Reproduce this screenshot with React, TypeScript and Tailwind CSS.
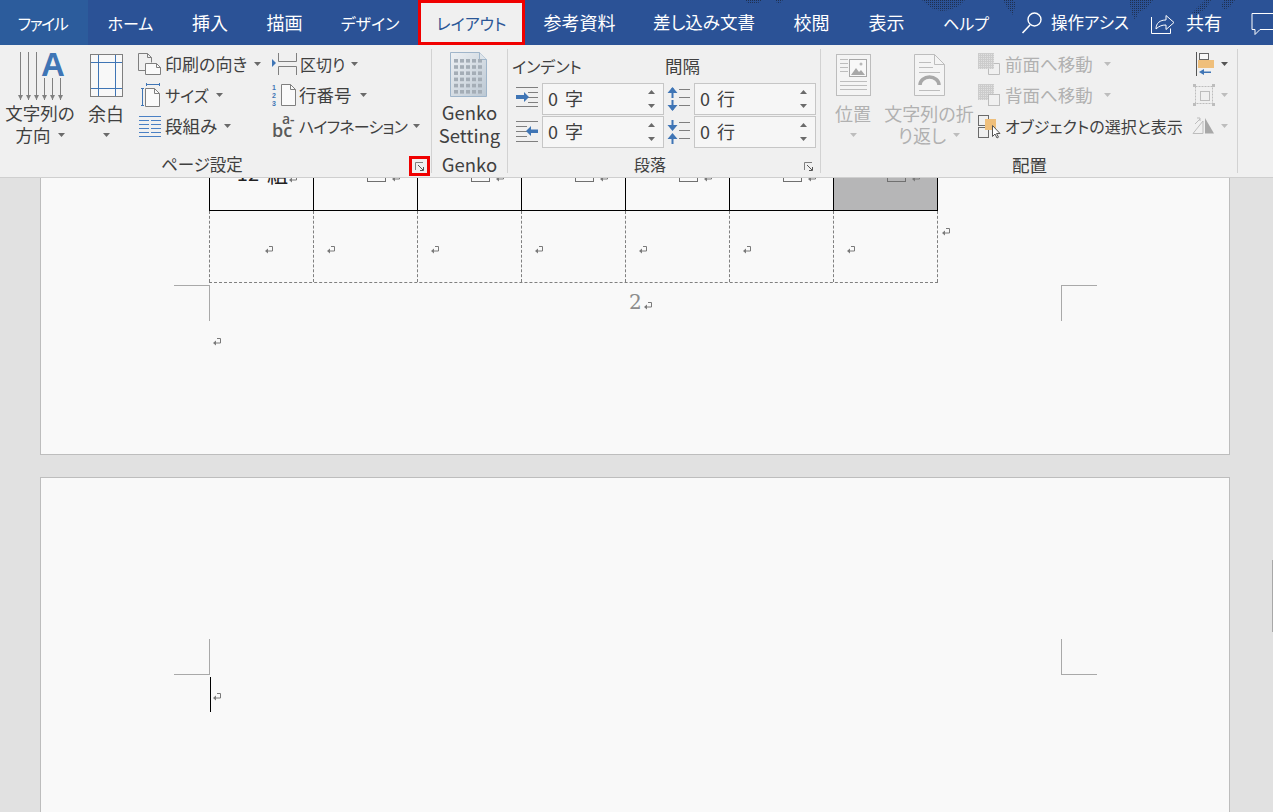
import React from "react";

const Caret = ({ c = "#6a6a6a", up = false }: { c?: string; up?: boolean }) => (
  <svg width="7" height="4" viewBox="0 0 7 4" className="shrink-0">
    <path d={up ? "M3.5 0L7 4H0z" : "M0 0h7L3.5 4z"} fill={c} />
  </svg>
);

const Ret = ({ c = "#7a7a7a" }: { c?: string }) => (
  <svg width="8" height="8" viewBox="0 0 8 8" className="shrink-0 block">
    <path d="M4 .5h3.500v4.500H2" fill="none" stroke={c} strokeWidth="1" />
    <path d="M3 2.500L0 5l3 2.500z" fill={c} />
  </svg>
);

const G = "#7f7f7f";
const B = "#3f75b5";
const D = "#bdbdbd";

const Arrow = ({ x, y1, y2, c = "#808080" }: { x: number; y1: number; y2: number; c?: string }) => (
  <g>
    <path d={`M${x} ${y1}V${y2}`} stroke={c} strokeWidth="1" />
    <path d={`M${x - 2.5} ${y2 - 5}h5L${x} ${y2}z`} fill={c} />
  </g>
);

const TextDirIcon = () => (
  <svg width="80" height="50" viewBox="0 0 80 50">
    <Arrow x={20.5} y1={1} y2={49} />
    <Arrow x={28.5} y1={1} y2={49} />
    <Arrow x={36.5} y1={1} y2={49} />
    <text x="53" y="25" textAnchor="middle" fontFamily="'Liberation Sans',sans-serif" fontWeight="700" fontSize="33" fill={B}>A</text>
    <Arrow x={44.5} y1={27} y2={49} />
    <Arrow x={52.5} y1={27} y2={49} />
    <Arrow x={60.5} y1={27} y2={49} />
  </svg>
);

const MarginIcon = () => (
  <svg width="52" height="50" viewBox="0 0 52 50">
    <rect x="10.5" y="3.5" width="32" height="42" fill="#f8f8f8" stroke={G} />
    <path d="M18.5 4v41M35.5 4v41M11 11.5h31M11 37.5h31" stroke={B} strokeWidth="1" />
  </svg>
);

const OrientIcon = () => (
  <svg width="25" height="24" viewBox="0 0 25 24">
    <path d="M1.5 1.5h9l4 4v5M1.5 1.5v17h7" fill="none" stroke={G} />
    <path d="M8.5 11.5h11l4 4v7h-15z" fill="#fafafa" stroke={G} />
    <path d="M10.5 1.5v4h4M19.5 11.5v4h4" fill="none" stroke={G} />
  </svg>
);

const SizeIcon = () => (
  <svg width="24" height="24" viewBox="0 0 24 24">
    <path d="M9 1.5h14M9.500 0v3M22.500 0v3M5.500 5v18M4 5.500h3M4 22.500h3" stroke={B} fill="none" />
    <path d="M8.500 5.500h9l5 5v13h-14z" fill="#fafafa" stroke={G} />
    <path d="M17.500 5.500v5h5" fill="none" stroke={G} />
  </svg>
);

const ColsIcon = () => (
  <svg width="24" height="24" viewBox="0 0 24 24">
    <path d="M2 2.500h22M2 6.500h10M14 6.500h10M2 10.500h10M14 10.500h10M2 14.500h10M14 14.500h10M2 18.500h10M14 18.500h10M2 22.500h22" stroke="#4a80c4" />
  </svg>
);

const BreakIcon = () => (
  <svg width="26" height="24" viewBox="0 0 26 24">
    <path d="M1 7l4 4-4 4z" fill={B} />
    <path d="M7.500 1v8.500h18V1M7.500 23v-8.500h18V23" fill="none" stroke={G} />
  </svg>
);

const LineNumIcon = () => (
  <svg width="26" height="24" viewBox="0 0 26 24">
    <text x="1" y="7" fontSize="7" fontWeight="700" fontFamily="'Liberation Sans',sans-serif" fill={B}>1</text>
    <text x="1" y="15" fontSize="7" fontWeight="700" fontFamily="'Liberation Sans',sans-serif" fill={B}>2</text>
    <text x="1" y="23" fontSize="7" fontWeight="700" fontFamily="'Liberation Sans',sans-serif" fill={B}>3</text>
    <path d="M10.500 1.500h9l5 5v16h-14z" fill="#fafafa" stroke={G} />
    <path d="M19.500 1.500v5h5" fill="none" stroke={G} />
  </svg>
);

const HyphenIcon = () => (
  <svg width="27" height="26" viewBox="0 0 27 26">
    <text x="11" y="11" fontSize="14" fontFamily="'Open Sans',sans-serif" fontWeight="600" fill="#5a5a5a">a-</text>
    <text x="1" y="24" fontSize="18" fontFamily="'Open Sans',sans-serif" fontWeight="600" fill="#5a5a5a">bc</text>
  </svg>
);

const GenkoIcon = () => (
  <svg width="75" height="50" viewBox="0 0 75 50">
    <defs>
      <linearGradient id="gk" x1="0" y1="0" x2="1" y2="1">
        <stop offset="0" stopColor="#eef1f4" />
        <stop offset="1" stopColor="#bcc8d3" />
      </linearGradient>
    </defs>
    <path d="M18.500 3.500h29l7 7v37h-36z" fill="url(#gk)" stroke="#9fb5ca" />
    <path d="M47.500 3.500v7h7" fill="#dfe5ea" stroke="#9fb5ca" />
    {[0, 1, 2, 3, 4, 5].map((r) =>
      [0, 1, 2, 3, 4].map((c) => (
        <rect key={`${r}-${c}`} x={22 + c * 6} y={10 + r * 6.2} width="4" height="3.6" fill="#a4adb6" />
      ))
    )}
  </svg>
);

const IndentInIcon = () => (
  <svg width="30" height="32" viewBox="0 0 30 32">
    <path d="M4 4.500h22M16 9.500h10M16 14.500h10M16 19.500h10M4 23.500h22" stroke={G} />
    <path d="M4 12h8V9l5 5-5 5v-3H4z" fill={B} />
  </svg>
);

const IndentOutIcon = () => (
  <svg width="30" height="32" viewBox="0 0 30 32">
    <path d="M4 5.500h22M4 10.500h11M4 15.500h11M4 20.500h11M4 25.500h22" stroke={G} />
    <path d="M26 13.500h-7V10l-5 5 5 5v-3h7z" fill={B} />
  </svg>
);

const SpaceOutIcon = () => (
  <svg width="30" height="32" viewBox="0 0 30 32">
    <path d="M8.500 5v10M8.500 17v10" stroke={B} strokeWidth="2" />
    <path d="M3.500 10l5-6 5 6zM3.500 22l5 6 5-6z" fill={B} />
    <path d="M15 6.500h11M15 14.500h11M15 22.500h11" stroke={G} />
  </svg>
);

const SpaceInIcon = () => (
  <svg width="30" height="32" viewBox="0 0 30 32">
    <path d="M8.500 4v9M8.500 19v9" stroke={B} strokeWidth="2" />
    <path d="M3.500 9l5 6 5-6zM3.500 23l5-6 5 6z" fill={B} />
    <path d="M15 6.500h11M15 14.500h11M15 22.500h11" stroke={G} />
  </svg>
);

const PositionIcon = () => (
  <svg width="64" height="50" viewBox="0 0 64 50">
    <rect x="15.500" y="3.500" width="34" height="41" fill="#f4f4f4" stroke={D} />
    <path d="M19 8.500h8M19 12.500h8M19 16.500h8M19 20.500h8M19 30.500h27M19 34.500h27M19 38.500h27" stroke={D} />
    <rect x="28.500" y="8.500" width="17" height="17" fill="#f8f8f8" stroke="#a8a8a8" />
    <path d="M30 24l5-7 3 4 2-2 4 5z" fill="#a8a8a8" />
    <circle cx="40" cy="13" r="1.500" fill="#b8b8b8" />
  </svg>
);

const WrapIcon = () => (
  <svg width="88" height="50" viewBox="0 0 88 50">
    <path d="M29.500 3.500h20l10 10v31h-30z" fill="#f4f4f4" stroke={D} />
    <path d="M49.500 3.500v10h10" fill="none" stroke={D} />
    <path d="M34 11.500h12M34 16.500h14M34 21.500h21M34 39.500h21" stroke={D} />
    <path d="M35 34a9.500 8 0 0 1 19 0" fill="none" stroke="#a8a8a8" strokeWidth="3.500" />
  </svg>
);

const Dots = ({ x, y, s = 14 }: { x: number; y: number; s?: number }) => (
  <rect x={x} y={y} width={s} height={s} fill="url(#dis)" />
);

const FrontIcon = ({ back = false }: { back?: boolean }) => (
  <svg width="26" height="24" viewBox="0 0 26 24">
    <defs>
      <pattern id="dis" width="2" height="2" patternUnits="userSpaceOnUse">
        <rect width="2" height="2" fill="#cccccc" />
        <rect width="1" height="1" fill="#e0e0e0" />
      </pattern>
    </defs>
    {back ? (
      <>
        <Dots x={1} y={1} s={16} />
        <rect x="11.500" y="11.500" width="11" height="11" fill="#f0f0f0" stroke={D} />
      </>
    ) : (
      <>
        <path d="M11.500 11.500h11v11h-11z" fill="#f0f0f0" stroke={D} />
        <Dots x={1} y={1} s={16} />
      </>
    )}
  </svg>
);

const SelectIcon = () => (
  <svg width="26" height="26" viewBox="0 0 26 26">
    <rect x="1.500" y="2.500" width="10" height="10" fill="none" stroke="#6a6a6a" />
    <rect x="1.500" y="14.500" width="10" height="10" fill="none" stroke="#6a6a6a" />
    <rect x="8" y="6" width="11" height="11" fill="#efbf7b" />
    <path d="M15.500 12.500v11l2.500-2.500 2 4 1.500-.8-2-3.700h3.500z" fill="#fff" stroke="#555" />
  </svg>
);

const AlignIcon = () => (
  <svg width="24" height="26" viewBox="0 0 24 26">
    <path d="M4.500 1v24" stroke="#555" />
    <rect x="7.500" y="2.500" width="9" height="6" fill="#f8f8f8" stroke="#666" />
    <rect x="6" y="9" width="16" height="8" fill="#efbf7b" />
    <path d="M19 20.500h-7V18l-5 3 5 3v-2h7z" fill={B} />
  </svg>
);

const GroupIcon = () => (
  <svg width="24" height="24" viewBox="0 0 24 24">
    <rect x="3.500" y="3.500" width="17" height="17" fill="none" stroke={D} strokeDasharray="2 1" />
    <rect x="8.500" y="8.500" width="9" height="9" fill="none" stroke={D} />
    <path d="M1 1h3v3H1zM20 1h3v3h-3zM1 20h3v3H1zM20 20h3v3h-3z" fill={D} />
  </svg>
);

const RotateIcon = () => (
  <svg width="24" height="24" viewBox="0 0 24 24">
    <path d="M1 19.500L11 7v12.500z" fill="none" stroke={D} />
    <path d="M13 4l9 15.500H13z" fill="#a8a8a8" />
    <path d="M3 10l5-5M5 4h3v3" fill="none" stroke={D} />
  </svg>
);

const Launcher = () => (
  <svg width="9" height="9" viewBox="0 0 9 9" className="block">
    <path d="M.5 8V.5H8" fill="none" stroke="#7f7f7f" />
    <path d="M3 3l5 5M8.500 5v3.500H5" fill="none" stroke="#555" />
  </svg>
);

const Row = ({
  icon,
  w,
  text,
  gap,
  disabled,
  caret = true,
  cls = "",
}: {
  icon: React.ReactNode;
  w: string;
  text: string;
  gap: string;
  disabled?: boolean;
  caret?: boolean;
  cls?: string;
}) => (
  <div className={`flex items-center h-[31px] whitespace-nowrap ${disabled ? "text-[#b1b1b1]" : "text-[#404040]"}`}>
    <div className={`flex items-center shrink-0 ${w}`}>{icon}</div>
    <span className={`leading-[22px] ${cls}`}>{text}</span>
    {caret && (
      <span className={`flex ${gap}`}>
        <Caret c={disabled ? "#bdbdbd" : "#6a6a6a"} />
      </span>
    )}
  </div>
);

const Large = ({
  w,
  icon,
  l1,
  l2,
  disabled,
  caretOnly,
  cls = "text-[18px]",
}: {
  w: string;
  icon: React.ReactNode;
  l1: string;
  l2?: string;
  disabled?: boolean;
  caretOnly?: boolean;
  cls?: string;
}) => (
  <div className={`flex flex-col items-center shrink-0 whitespace-nowrap pt-[6px] ${w} ${cls} ${disabled ? "text-[#b1b1b1]" : "text-[#404040]"}`}>
    <div className="h-[51px] flex items-start">{icon}</div>
    <div className="h-[22px] leading-[22px]">{l1}</div>
    <div className="h-[22px] leading-[22px] flex items-center gap-[7px]">
      {l2 && <span>{l2}</span>}
      {(caretOnly || l2) && <Caret c={disabled ? "#bdbdbd" : "#6a6a6a"} />}
    </div>
  </div>
);

const Group = ({
  w,
  label,
  children,
  labelClass = "",
  launcher,
}: {
  w: string;
  label: string;
  children: React.ReactNode;
  labelClass?: string;
  launcher?: React.ReactNode;
}) => (
  <div className={`flex flex-col shrink-0 relative ${w}`}>
    <div className="h-[107px] flex">{children}</div>
    <div className={`h-[25px] leading-[25px] text-[#404040] whitespace-nowrap ${labelClass}`}>{label}</div>
    {launcher}
  </div>
);

const Sep = () => <div className="w-px h-[124px] mt-[4px] bg-[#d2d2d2] shrink-0" />;

const Spin = ({ unit }: { unit: string }) => (
  <div className="w-[122px] h-[32px] border border-[#c6c6c6] bg-[#f6f6f6] flex items-center justify-between pl-[5px] pr-[8px]">
    <span className="flex items-center text-[#404040] text-[18px] leading-none -mt-[2px]">
      <span>0</span>
      <span className="ml-[7px]">{unit}</span>
    </span>
    <div className="flex flex-col gap-[10px]">
      <Caret up />
      <Caret />
    </div>
  </div>
);

const TABS: [string, string, string][] = [
  ["ホーム", "w-[85px]", "text-[16px]"],
  ["挿入", "w-[74px]", "text-[18px]"],
  ["描画", "w-[75px]", "text-[18px]"],
  ["デザイン", "w-[96px]", "text-[16px]"],
];
const TABS2: [string, string, string][] = [
  ["参考資料", "w-[109px]", "text-[18px]"],
  ["差し込み文書", "w-[140px]", "text-[17.5px]"],
  ["校閲", "w-[75px]", "text-[18px]"],
  ["表示", "w-[75px]", "text-[18px]"],
  ["ヘルプ", "w-[84px]", "text-[16px]"],
];

const Tab = ({ t, w, c }: { t: string; w: string; c: string }) => (
  <div className={`flex items-center justify-center shrink-0 whitespace-nowrap text-white ${w} ${c}`}>{t}</div>
);

const Cell = ({ first, last, gray }: { first?: boolean; last?: boolean; gray?: boolean }) => (
  <div
    className={`w-[104px] h-[32px] overflow-hidden border-l border-black flex justify-end items-start shrink-0 ${last ? "w-[105px] border-r" : ""} ${gray ? "bg-[#b6b6b7]" : ""}`}
  >
    {first ? (
      <div className="flex items-end -mt-[16px] mr-[16px]">
        <span className="text-[20px] leading-[22px] text-[#222]">12</span>
        <span className="text-[21px] leading-[22px] text-[#222] ml-[8px]">組</span>
        <span className="ml-[1px] mb-[1px]">
          <Ret />
        </span>
      </div>
    ) : (
      <div className="flex items-start gap-[6px] mr-[17px] -mt-[4px]">
        <div className="w-[19px] h-[8px] border border-[#707070]" />
        <Ret />
      </div>
    )}
  </div>
);

const DashCell = ({ first, last }: { first?: boolean; last?: boolean }) => (
  <div
    className={`w-[104px] h-[71px] border-l border-dashed border-[#808080] flex items-center shrink-0 pt-[7px] ${first ? "pl-[55px]" : "pl-[13px]"} ${last ? "w-[105px] border-r" : ""}`}
  >
    <Ret />
  </div>
);

export default function App() {
  return (
    <div
      className="w-[1273px] h-[812px] overflow-hidden relative bg-[#e1e1e1] text-[16px] [font-feature-settings:'palt']"
      style={{ fontFamily: "'Noto Sans CJK JP','Noto Sans',sans-serif" }}
    >
      {/* tabs */}
      <div className="h-[45px] bg-[#2b5296] flex relative">
        <div className="w-[88px] shrink-0 bg-[#2c5c9c] flex items-center justify-center text-white tracking-[-1.5px] pr-[3px]">ファイル</div>
        {TABS.map(([t, w, c]) => (
          <Tab key={t} t={t} w={w} c={c} />
        ))}
        <div className="w-[107px] shrink-0 bg-[#f0f0f0] border-[3px] border-[#f00000] flex items-center justify-center text-[#2b5797]">
          レイアウト
        </div>
        {TABS2.map(([t, w, c]) => (
          <Tab key={t} t={t} w={w} c={c} />
        ))}
        <div className="flex items-center text-white whitespace-nowrap pl-[13px]">
          <svg width="22" height="24" viewBox="0 0 22 24" className="shrink-0">
            <circle cx="13.500" cy="8.500" r="6.500" fill="none" stroke="#fff" strokeWidth="1.400" />
            <path d="M9 14L1.500 22" stroke="#fff" strokeWidth="1.600" />
          </svg>
          <span className="ml-[8px] w-[80px] text-[16.5px]">操作アシス</span>
          <svg width="26" height="24" viewBox="0 0 26 24" className="ml-[19px] shrink-0">
            <path d="M1.500 6v16.500h19v-5" fill="none" stroke="#fff" />
            <path d="M6 18c0-6 4-9 10-9V4.500l8 7-8 7V14c-4 0-7 1-10 4z" fill="none" stroke="#fff" />
          </svg>
          <span className="ml-[10px] text-[18px]">共有</span>
          <svg width="22" height="24" viewBox="0 0 22 24" className="ml-[29px] shrink-0">
            <path d="M1 2.500h24v16H9l-5 5v-5H1z" fill="none" stroke="#fff" />
          </svg>
        </div>
        <svg className="absolute left-0 top-0 pointer-events-none" width="1273" height="22" viewBox="0 0 1273 22">
          <defs>
            <pattern id="dots" width="2" height="2" patternUnits="userSpaceOnUse">
              <rect width="1" height="1" fill="#1f3050" />
            </pattern>
          </defs>
          <path d="M922 0h43l-6 6-10 4-8 1-10-3z" fill="url(#dots)" />
          <path d="M1003 0h10l3 3-3 12-5-6z" fill="url(#dots)" />
          <path d="M1129 0h24l-6 8-8 4-4 8-3-6z" fill="url(#dots)" />
          <path d="M1205 0h6l-4 7-10 8-5-2z" fill="url(#dots)" />
          <path d="M1224 0h11l-4 6-7 4-3-4z" fill="url(#dots)" />
          <path d="M745 0h17l-5 4h-9zM775 0h8l-3 3h-3z" fill="url(#dots)" />
        </svg>
      </div>

      {/* ribbon */}
      <div className="h-[133px] bg-[#f0f0f0] border-b border-[#cfcfcf] flex">
        <Group
          w="w-[431px]"
          label="ページ設定"
          labelClass="pl-[161px] text-[16.5px]"
          launcher={
            <div className="absolute left-[409px] top-[111px] w-[21px] h-[20px] border-[3px] border-[#f00000] flex items-center justify-center">
              <Launcher />
            </div>
          }
        >
          <Large w="w-[80px]" icon={<TextDirIcon />} l1="文字列の" l2="方向" cls="text-[17.5px]" />
          <Large w="w-[52px]" icon={<MarginIcon />} l1="余白" caretOnly />
          <div className="flex flex-col pt-[3px] pl-[5px] w-[138px] shrink-0">
            <Row icon={<OrientIcon />} w="w-[28px]" text="印刷の向き" gap="ml-[7px]" cls="text-[17px]" />
            <Row icon={<SizeIcon />} w="w-[28px]" text="サイズ" gap="ml-[7px]" />
            <Row icon={<ColsIcon />} w="w-[28px]" text="段組み" gap="ml-[7px]" cls="text-[17.5px]" />
          </div>
          <div className="flex flex-col pt-[3px] pl-[1px]">
            <Row icon={<BreakIcon />} w="w-[29px]" text="区切り" gap="ml-[6px]" />
            <Row icon={<LineNumIcon />} w="w-[28px]" text="行番号" gap="ml-[8px]" cls="text-[17.5px]" />
            <Row icon={<HyphenIcon />} w="w-[28px]" text="ハイフネーション" gap="ml-[6px]" cls="tracking-[-0.75px]" />
          </div>
        </Group>
        <Sep />
        <Group w="w-[75px]" label="Genko" labelClass="text-center text-[18.5px]">
          <div className="flex flex-col items-center w-[75px] pt-[4px] text-[#404040] text-[18.5px]">
            <div className="h-[52px]">
              <GenkoIcon />
            </div>
            <div className="h-[23px] leading-[22px]">Genko</div>
            <div className="h-[22px] leading-[22px]">Setting</div>
          </div>
        </Group>
        <Sep />
        <Group
          w="w-[312px]"
          label="段落"
          labelClass="pl-[126px]"
          launcher={
            <div className="absolute left-[296px] top-[117px]">
              <Launcher />
            </div>
          }
        >
          <div className="w-[156px] pl-[4px] pt-[9px] shrink-0">
            <div className="h-[24px] leading-[24px] text-[#404040] mb-[5px]">インデント</div>
            <div className="flex mb-px">
              <IndentInIcon />
              <Spin unit="字" />
            </div>
            <div className="flex">
              <IndentOutIcon />
              <Spin unit="字" />
            </div>
          </div>
          <div className="w-[152px] pt-[9px] shrink-0">
            <div className="h-[24px] leading-[24px] text-[17.5px] text-[#404040] mb-[5px] pl-[1px]">間隔</div>
            <div className="flex mb-px">
              <SpaceOutIcon />
              <Spin unit="行" />
            </div>
            <div className="flex">
              <SpaceInIcon />
              <Spin unit="行" />
            </div>
          </div>
        </Group>
        <Sep />
        <Group w="w-[416px]" label="配置" labelClass="pl-[191px] text-[17.5px]">
          <Large w="w-[64px]" icon={<PositionIcon />} l1="位置" caretOnly disabled />
          <Large w="w-[88px]" icon={<WrapIcon />} l1="文字列の折" l2="り返し" disabled />
          <div className="flex flex-col pt-[3px] pl-[4px] w-[215px] shrink-0">
            <Row icon={<FrontIcon />} w="w-[28px]" text="前面へ移動" gap="ml-[11px]" disabled cls="text-[17.5px]" />
            <Row icon={<FrontIcon back />} w="w-[28px]" text="背面へ移動" gap="ml-[11px]" disabled cls="text-[17.5px]" />
            <Row icon={<SelectIcon />} w="w-[28px]" text="オブジェクトの選択と表示" gap="" caret={false} />
          </div>
          <div className="flex flex-col pt-[3px] pl-[4px]">
            {[<AlignIcon key="a" />, <GroupIcon key="g" />, <RotateIcon key="r" />].map((ic, i) => (
              <div key={i} className="h-[31px] flex items-center gap-[5px]">
                {ic}
                <Caret c={i === 0 ? "#555" : "#bdbdbd"} />
              </div>
            ))}
          </div>
        </Group>
        <Sep />
      </div>

      {/* document */}
      <div className="relative">
        <div className="ml-[40px] w-[1190px] h-[277px] bg-[#f9f9f9] border-x border-b border-[#bdbdbd] overflow-hidden">
          <div className="ml-[168px] flex items-start">
            <div className="w-[729px] shrink-0">
              <div className="flex border-b border-black">
                <Cell first />
                <Cell />
                <Cell />
                <Cell />
                <Cell />
                <Cell />
                <Cell last gray />
              </div>
              <div className="flex border-b border-dashed border-[#808080]">
                <DashCell first />
                <DashCell />
                <DashCell />
                <DashCell />
                <DashCell />
                <DashCell />
                <DashCell last />
              </div>
            </div>
            <div className="ml-[4px] mt-[50px]">
              <Ret />
            </div>
          </div>
          <div className="ml-[133px] mt-[2px] flex w-[923px]">
            <div className="w-[36px] h-[36px] border-t border-r border-[#a9a9a9] shrink-0" />
            <div className="flex-1 flex items-start pl-[419px] pt-[5px]">
              <span className="text-[20px] leading-[24px] text-[#8c8c8c]" style={{ fontFamily: "'DejaVu Serif',serif" }}>
                2
              </span>
              <span className="ml-[2px] mt-[12px]">
                <Ret />
              </span>
            </div>
            <div className="w-[36px] h-[36px] border-t border-l border-[#a9a9a9] shrink-0" />
          </div>
          <div className="ml-[172px] mt-[17px]">
            <Ret />
          </div>
        </div>

        <div className="ml-[40px] mt-[22px] w-[1190px] h-[400px] bg-[#f9f9f9] border-x border-t border-[#bdbdbd] pt-[161px]">
          <div className="ml-[133px] flex justify-between w-[923px]">
            <div className="w-[36px] h-[36px] border-b border-r border-[#a9a9a9]" />
            <div className="w-[36px] h-[36px] border-b border-l border-[#a9a9a9]" />
          </div>
          <div className="ml-[169px] mt-[2px] flex items-center">
            <div className="w-px h-[35px] bg-black" />
            <div className="ml-[2px] mt-[4px]">
              <Ret />
            </div>
          </div>
        </div>

        {/* scrollbar hint */}
        <div className="absolute right-0 top-[382px] w-px h-[72px] bg-[#a8a8a8]" />
      </div>
    </div>
  );
}
